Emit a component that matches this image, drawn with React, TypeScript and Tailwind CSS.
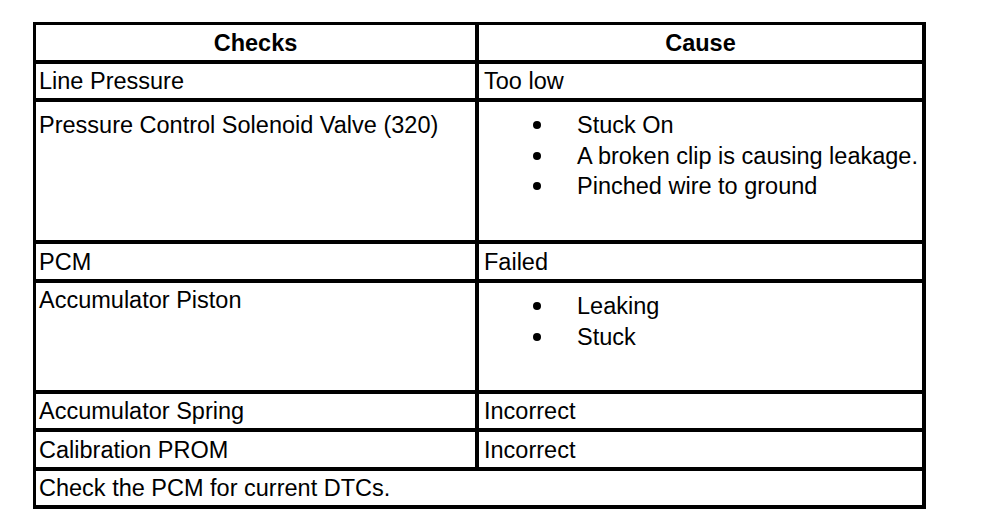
import React from 'react';

interface Row {
    check: string;
    cause: string | string[];
    height: string;
    checkPad?: string;
}

const rows: Row[] = [
    { check: 'Line Pressure', cause: 'Too low', height: 'h-[34px]' },
    {
        check: 'Pressure Control Solenoid Valve (320)',
        cause: ['Stuck On', 'A broken clip is causing leakage.', 'Pinched wire to ground'],
        height: 'h-[138px]',
        checkPad: 'pt-[6px]'
    },
    { check: 'PCM', cause: 'Failed', height: 'h-[35px]' },
    {
        check: 'Accumulator Piston',
        cause: ['Leaking', 'Stuck'],
        height: 'h-[107px]',
        checkPad: 'pt-0'
    },
    { check: 'Accumulator Spring', cause: 'Incorrect', height: 'h-[34px]' },
    { check: 'Calibration PROM', cause: 'Incorrect', height: 'h-[35px]' }
];

const BulletList: React.FC<{ items: string[] }> = ({ items }) => (
    <ul className="pt-[8px] leading-[30.5px]">
        {items.map(item => (
            <li key={item} className="flex items-center">
                <span className="w-[93px] flex justify-start pl-[49px]">
                    <span className="block w-[8px] h-[8px] rounded-full bg-black" />
                </span>
                <span>{item}</span>
            </li>
        ))}
    </ul>
);

const App: React.FC = () => {
    return (
        <div className="w-[992px] h-[532px] bg-white pt-[22px] pl-[33px] font-['Liberation_Sans',Arial,sans-serif] text-[23.5px] text-black">
            <div className="w-[893px] bg-black pt-[3px] pl-[3px] pr-[4px] pb-[4px] flex flex-col gap-[4px]">
                <div className="flex gap-[4px] h-[35px]">
                    <div className="w-[439px] bg-white flex items-center justify-center font-bold pt-[2px]">Checks</div>
                    <div className="w-[443px] bg-white flex items-center justify-center font-bold pt-[2px]">Cause</div>
                </div>

                {rows.map(row => {
                    const isList = Array.isArray(row.cause);
                    return (
                        <div key={row.check} className={`flex gap-[4px] ${row.height}`}>
                            <div
                                className={`w-[439px] bg-white pl-[3px] ${isList ? row.checkPad : 'flex items-center pt-[2px]'}`}
                            >
                                {row.check}
                            </div>
                            <div className={`w-[443px] bg-white pl-[5px] ${isList ? '' : 'flex items-center pt-[2px]'}`}>
                                {isList ? <BulletList items={row.cause as string[]} /> : row.cause}
                            </div>
                        </div>
                    );
                })}

                <div className="h-[34px] bg-white pl-[3px] flex items-center pt-[2px]">
                    Check the PCM for current DTCs.
                </div>
            </div>
        </div>
    );
};

export default App;
